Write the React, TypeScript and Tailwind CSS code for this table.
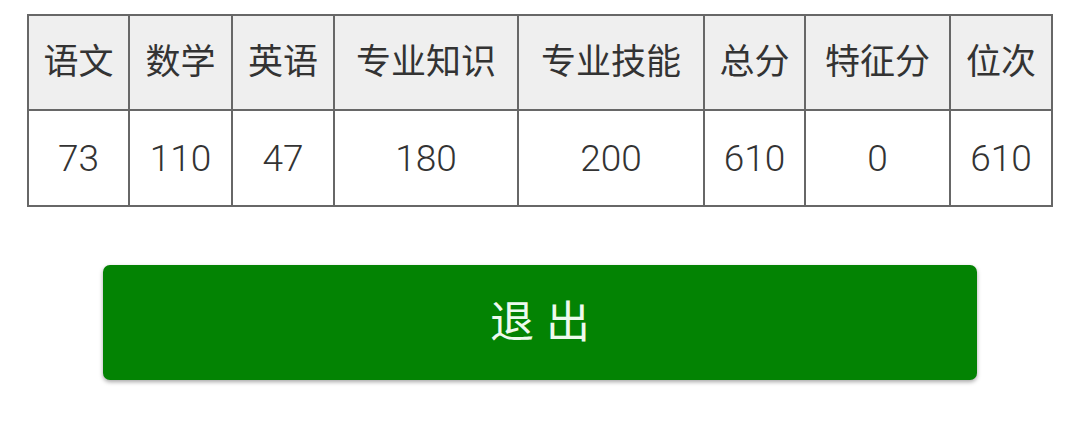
export default function App() {
  const headers = ["语文", "数学", "英语", "专业知识", "专业技能", "总分", "特征分", "位次"];
  const values = ["73", "110", "47", "180", "200", "610", "0", "610"];
  const font = { fontFamily: '"Roboto", "Noto Sans CJK SC", sans-serif' };
  return (
    <div className="w-[1080px] h-[448px] bg-white overflow-hidden" style={font}>
      <div className="ml-[27px] mt-[14px] w-[1026px] grid grid-cols-[99px_101px_100px_182px_184px_99px_143px_100px] grid-rows-[93px_94px] gap-[2px] border-2 border-[#676767] bg-[#676767]">
        {headers.map((h) => (
          <div key={h} className="bg-[#efefef] flex items-center justify-center text-[35px] text-[#333333] leading-none">
            {h}
          </div>
        ))}
        {values.map((v, i) => (
          <div key={i} className="bg-white flex items-center justify-center text-[37px] font-light text-[#333333] leading-none">
            {v}
          </div>
        ))}
      </div>
      <div className="ml-[103px] mt-[58px] w-[874px] h-[115px] rounded-[7px] bg-[#038303] shadow-[0_2px_4px_rgba(0,0,0,0.35)] flex items-center justify-center">
        <span className="text-[44px] text-[#eefaee] tracking-[12px] pl-[12px] leading-none">退出</span>
      </div>
    </div>
  );
}
